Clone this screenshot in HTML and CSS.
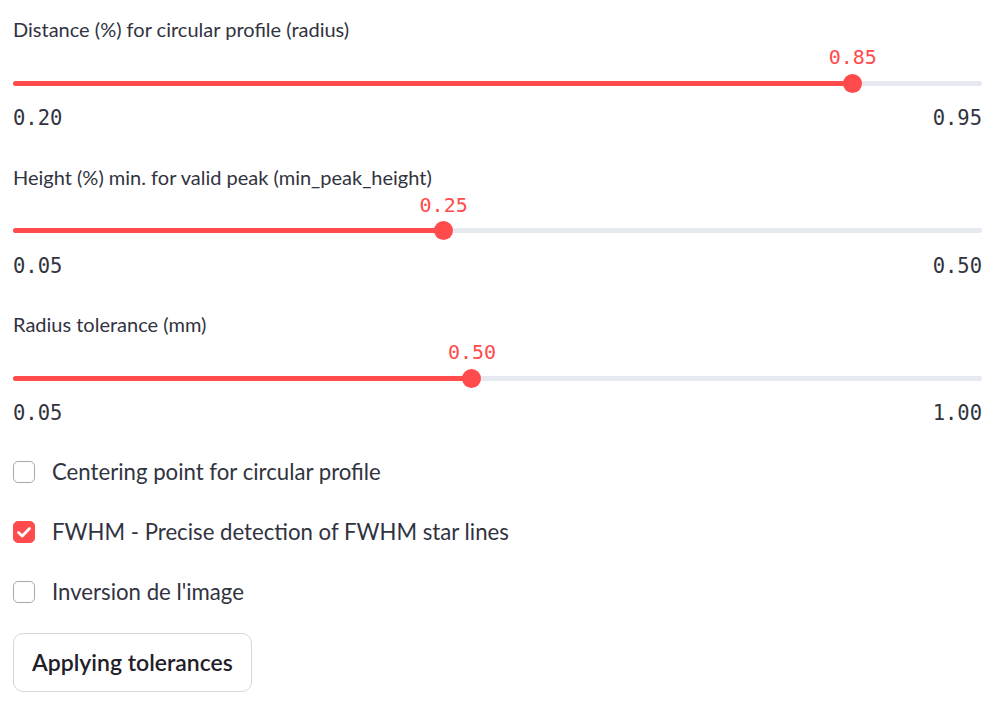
FILE: index.html
```html
<!DOCTYPE html>
<html>
<head>
<meta charset="utf-8">
<link rel="stylesheet" href="styles.css">
</head>
<body>
<main class="page">
  <section class="slider-block">
    <div class="slider-label">Distance (%) for circular profile (radius)</div>
    <div class="slider">
      <div class="track-row">
        <div class="track">
          <div class="fill" style="width: 86.667%"></div>
          <div class="thumb-pos" style="left: 86.667%">
            <span class="thumb-value">0.85</span>
            <span class="thumb"></span>
          </div>
        </div>
      </div>
      <div class="ticks"><span>0.20</span><span>0.95</span></div>
    </div>
  </section>

  <section class="slider-block">
    <div class="slider-label">Height (%) min. for valid peak (min_peak_height)</div>
    <div class="slider">
      <div class="track-row">
        <div class="track">
          <div class="fill" style="width: 44.444%"></div>
          <div class="thumb-pos" style="left: 44.444%">
            <span class="thumb-value">0.25</span>
            <span class="thumb"></span>
          </div>
        </div>
      </div>
      <div class="ticks"><span>0.05</span><span>0.50</span></div>
    </div>
  </section>

  <section class="slider-block">
    <div class="slider-label">Radius tolerance (mm)</div>
    <div class="slider">
      <div class="track-row">
        <div class="track">
          <div class="fill" style="width: 47.368%"></div>
          <div class="thumb-pos" style="left: 47.368%">
            <span class="thumb-value">0.50</span>
            <span class="thumb"></span>
          </div>
        </div>
      </div>
      <div class="ticks"><span>0.05</span><span>1.00</span></div>
    </div>
  </section>

  <div class="checks">
    <label class="check">
      <span class="box"></span>
      <span class="check-text">Centering point for circular profile</span>
    </label>
    <label class="check">
      <span class="box checked">
        <svg viewBox="0 0 22 22" width="22" height="22"><path d="M5.5 11.5 L9.2 15 L16.5 7.5" fill="none" stroke="#fff" stroke-width="2.8" stroke-linecap="round" stroke-linejoin="round"/></svg>
      </span>
      <span class="check-text">FWHM - Precise detection of FWHM star lines</span>
    </label>
    <label class="check">
      <span class="box"></span>
      <span class="check-text">Inversion de l'image</span>
    </label>
  </div>

  <div class="actions">
    <button class="btn">Applying tolerances</button>
  </div>
</main>
</body>
</html>
```

FILE: styles.css
```css
* { box-sizing: border-box; }
html, body { margin: 0; padding: 0; background: #fff; }
body {
  font-family: Lato, "Noto Sans", sans-serif;
  color: #31333f;
}
.page {
  width: 999px;
  padding: 17px 17px 0 13px;
  display: flex;
  flex-direction: column;
}
.slider-block {
  height: 147.5px;
}
.slider-label {
  font-size: 20px;
  line-height: 24px;
  height: 24px;
}
.slider {
  padding-top: 32px;
}
.track-row {
  height: 20px;
  display: flex;
  align-items: center;
}
.track {
  position: relative;
  width: 100%;
  height: 5px;
  border-radius: 3px;
  background: #e6e9ef;
}
.fill {
  height: 100%;
  border-radius: 3px;
  background: #ff4b4b;
}
.thumb-pos {
  position: absolute;
  top: 50%;
  width: 0;
  height: 0;
}
.thumb {
  position: absolute;
  left: -9.5px;
  top: -9.5px;
  width: 19px;
  height: 19px;
  border-radius: 50%;
  background: #ff4b4b;
}
.thumb-value {
  position: absolute;
  left: -40px;
  width: 80px;
  top: -38px;
  text-align: center;
  font-family: "DejaVu Sans Mono", "Liberation Mono", monospace;
  font-size: 20px;
  line-height: 24px;
  color: #ff4b4b;
}
.ticks {
  margin-top: 13px;
  display: flex;
  justify-content: space-between;
  font-family: "DejaVu Sans Mono", "Liberation Mono", monospace;
  font-size: 20.5px;
  line-height: 24px;
  color: #31333f;
}
.checks {
  display: flex;
  flex-direction: column;
  gap: 36px;
}
.check {
  display: flex;
  align-items: center;
  height: 24px;
  gap: 17px;
}
.box {
  width: 22px;
  height: 22px;
  border: 1.5px solid #a7a8ae;
  border-radius: 5px;
  display: flex;
  align-items: center;
  justify-content: center;
  flex: none;
}
.box.checked {
  background: #ff4b4b;
  border-color: #ff4b4b;
}
.box.checked svg { flex: none; margin: -1.5px; }
.check-text {
  font-size: 22.2px;
  line-height: 24px;
  white-space: nowrap;
}
.actions {
  margin-top: 29px;
  display: flex;
}
.btn {
  font-family: Lato, "Noto Sans", sans-serif;
  font-size: 23px;
  font-weight: 600;
  color: #1f2029;
  background: #fff;
  border: 1px solid #d5d6d9;
  border-radius: 10px;
  height: 59px;
  padding: 0 18px;
}
```
